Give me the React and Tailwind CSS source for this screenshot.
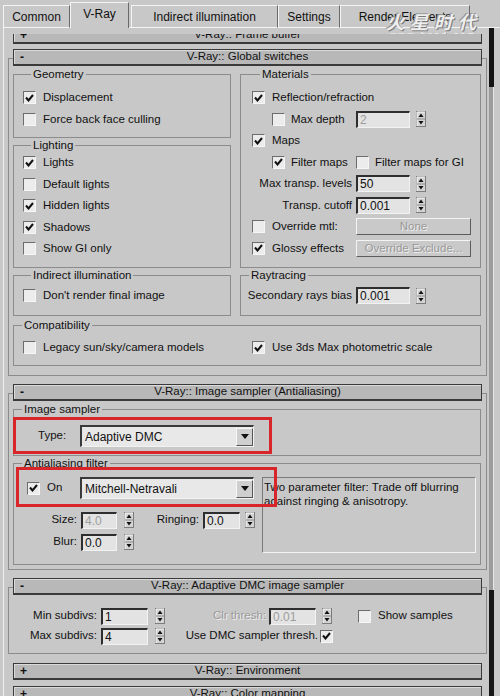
import React from "react";

function Check({ on }) {
    return (
        <span className="flex h-[13px] w-[13px] shrink-0 items-center justify-center border border-t-[#6c6c6c] border-l-[#6c6c6c] border-r-[#f6f6f6] border-b-[#f6f6f6] bg-[#ececec]">
            {on && (
                <svg width="9" height="8" viewBox="0 0 9 8">
                    <path d="M1 3.5 L3.5 6.5 L8 1" fill="none" stroke="#111" strokeWidth="2" />
                </svg>
            )}
        </span>
    );
}

function Spin({ className = "" }) {
    return (
        <svg width="10" height="16" viewBox="0 0 10 16" className={`shrink-0 ${className}`}>
            <rect x="0.5" y="0.5" width="9" height="15" fill="#d4d4d4" stroke="#7c7c7c" />
            <path d="M1 15 V1 H9" stroke="#fafafa" fill="none" />
            <line x1="1" y1="8" x2="9" y2="8" stroke="#8a8a8a" />
            <path d="M5 2.5 L7.5 6 H2.5Z" fill="#111" />
            <path d="M5 13.5 L7.5 10 H2.5Z" fill="#111" />
        </svg>
    );
}

function Field({ className = "", value, dim }) {
    return (
        <span
            className={`flex h-[17px] shrink-0 items-center border-t-2 border-l-2 border-r border-b border-t-[#2e2e2e] border-l-[#2e2e2e] border-r-[#f2f2f2] border-b-[#f2f2f2] bg-[#e3e3e3] pl-[2px] text-[12px] ${dim ? "text-[#9d9d9d]" : "text-[#111]"} ${className}`}
        >
            {value}
        </span>
    );
}

function Btn({ children }) {
    return (
        <span className="flex h-[17px] w-[115px] shrink-0 items-center justify-center border border-t-[#f4f4f4] border-l-[#f4f4f4] border-r-[#5c5c5c] border-b-[#5c5c5c] bg-[#c9c9c9] text-[#999] [text-shadow:1px_1px_0_#efefef]">
            {children}
        </span>
    );
}

function Drop({ value }) {
    return (
        <div className="flex h-[22px] w-[174px] shrink-0 items-center border-t-2 border-l-2 border-r border-b border-t-[#3a3a3a] border-l-[#3a3a3a] border-r-[#f2f2f2] border-b-[#f2f2f2] bg-[#e8e8e8]">
            <span className="flex-1 pl-[3px] text-[12px]">{value}</span>
            <span className="flex h-[18px] w-[17px] items-center justify-center border border-t-[#f6f6f6] border-l-[#f6f6f6] border-r-[#555] border-b-[#555] bg-[#cfcfcf]">
                <svg width="8" height="5" viewBox="0 0 8 5">
                    <path d="M0 0 H8 L4 5Z" fill="#111" />
                </svg>
            </span>
        </div>
    );
}

function Group({ label, className = "", children }) {
    return (
        <fieldset className={`border border-[#8c8c8c] ${className}`}>
            <legend className="ml-[8px] px-[2px] leading-[14px]">{label}</legend>
            {children}
        </fieldset>
    );
}

function CheckRow({ on, label, className = "" }) {
    return (
        <div className={`flex h-[21.5px] items-center gap-[7px] ${className}`}>
            <Check on={on} />
            <span>{label}</span>
        </div>
    );
}

function Header({ sign, title, className = "" }) {
    return (
        <div
            className={`relative z-10 mx-[5px] flex h-[17px] shrink-0 items-center border border-b-2 border-[#3a3a3a] bg-[#b8b8b8] shadow-[inset_1px_1px_0_#dadada] ${className}`}
        >
            <span className="w-[16px] pl-[6px] text-[12px] font-bold leading-none">{sign}</span>
            <span className="flex-1 pr-[16px] text-center leading-none">{title}</span>
        </div>
    );
}

function Frame({ className = "", children }) {
    return <div className={`-mt-[8px] border border-[#8c8c8c] pl-[4px] pr-[5px] ${className}`}>{children}</div>;
}

function Tabs() {
    const base = "flex items-center justify-center border-t border-l border-r border-t-[#f4f4f4] border-l-[#f4f4f4] border-r-[#6a6a6a] text-[12px]";
    return (
        <div className="flex h-[28px] items-end pl-[3px]">
            <div className={`${base} h-[23px] w-[67px] border-b border-b-[#f4f4f4]`}>Common</div>
            <div className={`${base} h-[26px] w-[59px] pb-[3px]`}>V-Ray</div>
            <div className="h-px w-[2px] bg-[#f4f4f4]" />
            <div className={`${base} h-[23px] w-[147px] border-b border-b-[#f4f4f4]`}>Indirect illumination</div>
            <div className={`${base} h-[23px] w-[62px] border-b border-b-[#f4f4f4]`}>Settings</div>
            <div className={`${base} h-[23px] w-[130px] border-b border-b-[#f4f4f4]`}>Render Elements</div>
            <div className="h-px flex-1 bg-[#f4f4f4]" />
        </div>
    );
}

export default function App() {
    return (
        <div className="relative h-[696px] w-[500px] overflow-hidden bg-[#c8c8c8] font-['Liberation_Sans',Arial,sans-serif] text-[11.5px] text-[#111]">
            <Tabs />
            <div className="flex h-[668px]">
                <div className="ml-[3px] w-[5px] border-l border-l-[#efefef]" />
                <div className="flex w-[479px] flex-col pt-[6px]">
                    <div className="flex-1 overflow-hidden">
                        <div className="-mt-[7px] flex flex-col">
                            {/* Frame buffer (collapsed) */}
                            <Header sign="+" title="V-Ray:: Frame buffer" />

                            {/* Global switches */}
                            <Header sign="-" title="V-Ray:: Global switches" className="mt-[5px]" />
                            <Frame className="pt-[8px] pb-[9px]">
                                <div className="flex gap-[9px]">
                                    <div className="flex w-[218px] flex-col">
                                        <Group label="Geometry" className="h-[71px] pl-[9px] pt-[6px]">
                                            <CheckRow on label="Displacement" />
                                            <CheckRow label="Force back face culling" />
                                        </Group>
                                        <Group label="Lighting" className="h-[130px] pl-[9px]">
                                            <CheckRow on label="Lights" />
                                            <CheckRow label="Default lights" />
                                            <CheckRow on label="Hidden lights" />
                                            <CheckRow on label="Shadows" />
                                            <CheckRow label="Show GI only" />
                                        </Group>
                                    </div>
                                    <Group label="Materials" className="h-[201px] w-[241px] pl-[11px] pt-[6px]">
                                        <CheckRow on label="Reflection/refraction" />
                                        <div className="flex h-[21.5px] items-center pl-[20px]">
                                            <Check />
                                            <span className="ml-[6px] w-[65px]">Max depth</span>
                                            <Field className="w-[54px]" value="2" dim />
                                            <Spin className="ml-[6px]" />
                                        </div>
                                        <CheckRow on label="Maps" />
                                        <div className="flex h-[21.5px] items-center pl-[20px]">
                                            <Check on />
                                            <span className="ml-[6px] w-[65px]">Filter maps</span>
                                            <Check />
                                            <span className="ml-[6px]">Filter maps for GI</span>
                                        </div>
                                        <div className="flex h-[21.5px] items-center">
                                            <span className="w-[104px] pr-[4px] text-right">Max transp. levels</span>
                                            <Field className="w-[54px]" value="50" />
                                            <Spin className="ml-[6px]" />
                                        </div>
                                        <div className="flex h-[21.5px] items-center">
                                            <span className="w-[104px] pr-[4px] text-right">Transp. cutoff</span>
                                            <Field className="w-[54px]" value="0.001" />
                                            <Spin className="ml-[6px]" />
                                        </div>
                                        <div className="flex h-[21.5px] items-center">
                                            <Check />
                                            <span className="ml-[7px] w-[84px]">Override mtl:</span>
                                            <Btn>None</Btn>
                                        </div>
                                        <div className="flex h-[21.5px] items-center">
                                            <Check on />
                                            <span className="ml-[7px] w-[84px]">Glossy effects</span>
                                            <Btn>Override Exclude...</Btn>
                                        </div>
                                    </Group>
                                </div>
                                <div className="flex gap-[9px]">
                                    <Group label="Indirect illumination" className="h-[48px] w-[218px] pl-[9px] pt-[3px]">
                                        <CheckRow label="Don't render final image" />
                                    </Group>
                                    <Group label="Raytracing" className="h-[48px] w-[241px] pt-[3px]">
                                        <div className="flex h-[21.5px] items-center">
                                            <span className="w-[115px] pr-[4px] text-right">Secondary rays bias</span>
                                            <Field className="w-[54px]" value="0.001" />
                                            <Spin className="ml-[6px]" />
                                        </div>
                                    </Group>
                                </div>
                                <Group label="Compatibility" className="mt-[2px] h-[48px] pt-[5px]">
                                    <div className="flex h-[21.5px] items-center">
                                        <div className="flex w-[226px] items-center gap-[7px] pl-[9px]">
                                            <Check />
                                            <span>Legacy sun/sky/camera models</span>
                                        </div>
                                        <div className="flex items-center gap-[7px] pl-[12px]">
                                            <Check on />
                                            <span>Use 3ds Max photometric scale</span>
                                        </div>
                                    </div>
                                </Group>
                            </Frame>

                            {/* Image sampler */}
                            <Header sign="-" title="V-Ray:: Image sampler (Antialiasing)" className="mt-[8px]" />
                            <Frame className="pt-[8px] pb-[4px]">
                                <Group label="Image sampler" className="h-[54px] pt-[9px]">
                                    <div className="flex items-center pl-[24px]">
                                        <span className="w-[42px]">Type:</span>
                                        <Drop value="Adaptive DMC" />
                                    </div>
                                </Group>
                                <Group label="Antialiasing filter" className="h-[109px] pt-[7px]">
                                    <div className="flex">
                                        <div className="flex w-[248px] flex-col">
                                            <div className="flex h-[22px] items-center pl-[13px]">
                                                <Check on />
                                                <span className="ml-[7px] w-[33px]">On</span>
                                                <Drop value="Mitchell-Netravali" />
                                            </div>
                                            <div className="mt-[10px] flex h-[22px] items-center">
                                                <span className="w-[67px] pr-[4px] text-right">Size:</span>
                                                <Field className="w-[36px]" value="4.0" dim />
                                                <Spin className="ml-[7px]" />
                                                <span className="w-[69px] pr-[4px] text-right">Ringing:</span>
                                                <Field className="w-[37px]" value="0.0" />
                                                <Spin className="ml-[5px]" />
                                            </div>
                                            <div className="flex h-[22px] items-center">
                                                <span className="w-[67px] pr-[4px] text-right">Blur:</span>
                                                <Field className="w-[36px]" value="0.0" />
                                                <Spin className="ml-[7px]" />
                                            </div>
                                        </div>
                                        <div className="h-[76px] w-[214px] border border-t-[#7a7a7a] border-l-[#7a7a7a] border-r-[#f4f4f4] border-b-[#f4f4f4] pl-[1px] pt-[2px] leading-[14px]">
                                            Two parameter filter: Trade off blurring against ringing &amp; anisotropy.
                                        </div>
                                    </div>
                                </Group>
                            </Frame>

                            {/* Adaptive DMC */}
                            <Header sign="-" title="V-Ray:: Adaptive DMC image sampler" className="mt-[8px]" />
                            <div className="-mt-[8px] border border-[#8c8c8c] pt-[18px] pb-[7px]">
                                <div className="flex h-[20px] items-center">
                                    <span className="w-[92px] pr-[4px] text-right">Min subdivs:</span>
                                    <Field className="w-[47px]" value="1" />
                                    <Spin className="ml-[7px]" />
                                    <span className="w-[104px] pr-[3px] text-right text-[#9a9a9a] [text-shadow:1px_1px_0_#efefef]">Clr thresh:</span>
                                    <Field className="w-[47px]" value="0.01" dim />
                                    <Spin className="ml-[6px]" />
                                    <span className="ml-[26px]">
                                        <Check />
                                    </span>
                                    <span className="ml-[7px]">Show samples</span>
                                </div>
                                <div className="flex h-[20px] items-center">
                                    <span className="w-[92px] pr-[4px] text-right">Max subdivs:</span>
                                    <Field className="w-[47px]" value="4" />
                                    <Spin className="ml-[7px]" />
                                    <span className="w-[155px] pr-[2px] text-right">Use DMC sampler thresh.</span>
                                    <Check on />
                                </div>
                            </div>

                            {/* Environment (collapsed) */}
                            <Header sign="+" title="V-Ray:: Environment" className="mt-[9px]" />
                            <Header sign="+" title="V-Ray:: Color mapping" className="mt-[6px]" />
                        </div>
                    </div>
                </div>
                {/* scroll strip */}
                <div className="flex w-[13px] flex-col pl-[2px] pr-[6px]">
                    <div className="h-[59px] bg-[#141414]" />
                    <div className="flex-1 border-r border-[#e6e6e6] bg-[#9c9c9c]" />
                    <div className="h-[106px] bg-[#161616]" />
                </div>
            </div>

            {/* annotation boxes */}
            <div className="pointer-events-none absolute left-[13px] top-[417px] h-[37px] w-[259px] border-[3px] border-[#d8252a]" />
            <div className="pointer-events-none absolute left-[16px] top-[467px] h-[40px] w-[261px] border-[3px] border-[#d8252a]" />

            {/* watermark */}
            <div className="pointer-events-none absolute left-[378px] top-[11px] flex w-[112px] flex-col items-center">
                <span className="font-['Noto_Sans_CJK_SC',sans-serif] text-[18px] font-bold italic leading-[20px] tracking-[6px] text-[#eeeeee] [text-shadow:1px_1px_0_#7a7a7a,-1px_-1px_0_#999]">
                    火星时代
                </span>
                <span className="text-[7px] font-bold leading-[8px] tracking-[3px] text-[#f2f2f2] [text-shadow:1px_1px_0_#8a8a8a]">
                    www.hxsd.com
                </span>
            </div>
        </div>
    );
}
